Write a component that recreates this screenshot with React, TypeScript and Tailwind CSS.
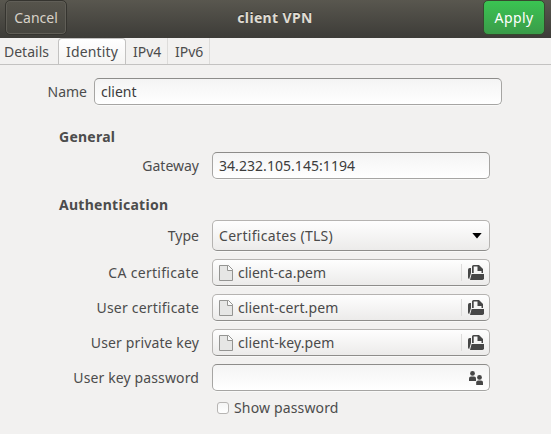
import type { ReactNode } from 'react';

const entry =
  'flex h-[27px] items-center rounded-[5px] border border-[#a6a5a3] border-t-[#8d8c8a] bg-gradient-to-b from-[#f4f4f4] to-white px-[6px] text-[#3c3c3c] shadow-[0_1px_0_#f9f9f8]';
const button =
  'flex items-center rounded-[5px] border border-[#b5b3b1] border-b-[#8e8d8b] bg-gradient-to-b from-[#fefefe] to-[#ecebea] pl-[6px] pr-[5px] text-[#4a4a4a] shadow-[0_1px_0_#f9f9f8]';

function DocumentIcon() {
  return (
    <svg width="14" height="16" viewBox="0 0 14 16" className="shrink-0">
      <path d="M.5.5h9l4 4v11H.5z" fill="#e6e6e5" stroke="#949492" />
      <path d="M8.5.5v5h5v-1l-4-4z" fill="#fafafa" stroke="#949492" />
    </svg>
  );
}

function OpenIcon() {
  return (
    <svg width="16" height="16" viewBox="0 0 16 16" fill="#464646" className="shrink-0">
      <path d="M1.7 3H3v5L1.2 14A1.5 1.5 0 0 1 0 12.5V4.7Q0 3 1.7 3Z" />
      <path d="M4 8V1.5Q4 0 5.5 0H11l4 4v4h-1.5V6H9.5V1.5H5.7V8Z" />
      <path d="M3.6 9H16v4.3q0 1.7-1.7 1.7H2z" />
    </svg>
  );
}

function PeopleIcon() {
  return (
    <svg width="14" height="14" viewBox="0 0 14 14" fill="#464646">
      <circle cx="3.5" cy="2.4" r="2.4" />
      <path d="M0 10V7.3Q0 5.4 2 5.4h3Q7 5.4 7 7.3V10Z" />
      <circle cx="10.5" cy="6.4" r="2.4" />
      <path d="M7.2 14v-2.7q0-1.9 2-1.9h2.8q2 0 2 1.9V14Z" />
    </svg>
  );
}

function Row({ label, children, className = '' }: { label: ReactNode; children: ReactNode; className?: string }) {
  return (
    <div className={`flex items-center ${className}`}>
      <div className="w-[199px] shrink-0 text-right">{label}</div>
      <div className="ml-[13px] w-[278px]">{children}</div>
    </div>
  );
}

function FileButton({ children }: { children: ReactNode }) {
  return (
    <div className={`${button} h-[27px]`}>
      <DocumentIcon />
      <span className="ml-[5px]">{children}</span>
      <span className="ml-auto mr-[6px] h-[17px] w-px bg-[#dcdbda]" />
      <OpenIcon />
    </div>
  );
}

export default function App() {
  return (
    <div className="h-[434px] w-[551px] overflow-hidden whitespace-nowrap bg-[#f2f1f0] font-['Noto_Sans',sans-serif] text-[14px] leading-[20px] text-[#4c4c4c]">
      <header className="flex h-[38px] items-start justify-between bg-gradient-to-b from-[#59574f] to-[#3d3c38] px-[5px]">
        <button className="flex h-[35px] w-[62px] items-center justify-center rounded-[5px] border border-[#35342f] bg-gradient-to-b from-[#56544c] to-[#46453f] text-[#d8d2c8] shadow-[inset_0_0_0_1px_#605e57]">
          <span>Cancel</span>
        </button>
        <h1 className="mt-[8px] font-bold tracking-[.35px] text-[#dfdbd2] [text-shadow:0_-1px_#2d2c29]">client VPN</h1>
        <button className="mr-px flex h-[35px] w-[62px] items-center justify-center rounded-[5px] border border-[#37492f] bg-gradient-to-b from-[#3ac452] to-[#3a9c49] tracking-[.4px] text-white">
          <span>Apply</span>
        </button>
      </header>
      <nav className="flex h-[27px] items-end border-b border-[#c3c2c1]">
        <div className="flex h-[26px] w-[58px] items-center pl-1 pt-px"><span>Details</span></div>
        <div className="flex h-[26px] w-[68px] items-center rounded-t-[4px] border border-b-0 border-[#c3c2c1] bg-gradient-to-b from-white to-[#f5f4f3] pl-[7px] tracking-[.15px]"><span>Identity</span></div>
        <div className="flex h-[26px] w-[42px] items-center border-r border-[#dddcda] pl-[7px] pt-px"><span>IPv4</span></div>
        <div className="flex h-[26px] w-[42px] items-center border-r border-[#dddcda] pl-[7px] pt-px"><span>IPv6</span></div>
      </nav>
      <main>
        <div className="mt-[13px] flex items-center">
          <div className="w-[87px] text-right"><span>Name</span></div>
          <div className={`${entry} ml-[7px] w-[408px]`}><span>client</span></div>
        </div>
        <h2 className="mt-[22px] pl-[59px] font-bold tracking-[.25px]">General</h2>
        <Row className="mt-[5px]" label={<span>Gateway</span>}>
          <div className={entry}><span className="tracking-[.05px]">34.232.105.145:1194</span></div>
        </Row>
        <h2 className="mt-[16px] pl-[59px] font-bold tracking-[.28px]">Authentication</h2>
        <Row className="mt-[5px]" label={<span>Type</span>}>
          <div className={`${button} h-[31px]`}>
            <span className="tracking-[.3px]">Certificates (TLS)</span>
            <svg width="10" height="6" viewBox="0 0 10 6" className="ml-auto mr-[2px]"><path d="M.3 0h9.4L5 5.5z" /></svg>
          </div>
        </Row>
        <Row className="mt-2" label={<span className="tracking-[.3px]">CA certificate</span>}><FileButton>client-ca.pem</FileButton></Row>
        <Row className="mt-2" label={<span className="tracking-[.2px]">User certificate</span>}><FileButton><span className="tracking-[.1px]">client-cert.pem</span></FileButton></Row>
        <Row className="mt-2" label={<span className="tracking-[.13px]">User private key</span>}><FileButton><span className="tracking-[.1px]">client-key.pem</span></FileButton></Row>
        <Row className="mt-2" label={<span className="tracking-[.12px]">User key password</span>}>
          <div className={`${entry} justify-end`}><PeopleIcon /></div>
        </Row>
        <label className="mt-[7px] flex items-center pl-[217px]">
          <span className="mr-[5px] h-3 w-3 rounded-[3px] border border-[#b7b5b3] bg-gradient-to-b from-[#f5f5f5] to-white" />
          <span className="tracking-[.15px]">Show password</span>
        </label>
      </main>
    </div>
  );
}
